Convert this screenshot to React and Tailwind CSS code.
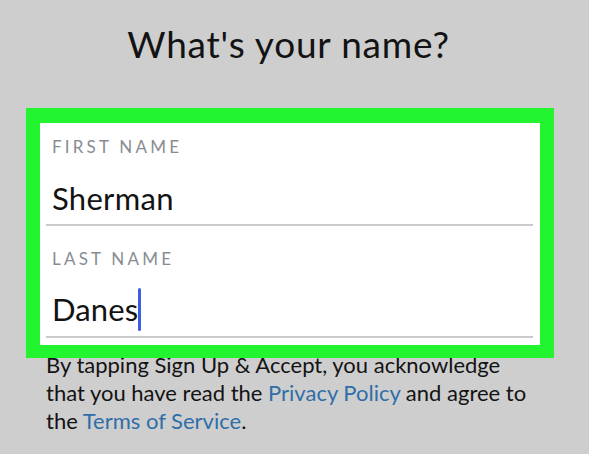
export default function App() {
  return (
    <div className="w-[589px] h-[454px] overflow-hidden bg-[#cecece] text-[#131313]" style={{ fontFamily: "Lato, 'Noto Sans', sans-serif" }}>
      <div className="pt-[22px] pr-[12px] h-[108px] text-center text-[37px] leading-[44px] tracking-[0.8px]">What's your name?</div>
      <div className="ml-[26px] w-[528px] border-[14px] border-t-[15px] border-b-[13px] border-[#22f52f] bg-white relative z-10">
        <div className="h-[103px] px-[6px] flex flex-col">
          <div className="pl-[6px] pt-[13px] text-[17px] leading-[22px] tracking-[3.2px] text-[#878c93]">FIRST NAME</div>
          <div className="pl-[6px] pt-[22px] text-[31px] leading-[36px] tracking-[0.3px]">Sherman</div>
          <div className="mt-auto border-b-2 border-[#cbcbcf] mr-[1px]"></div>
        </div>
        <div className="h-[112px] px-[6px] flex flex-col">
          <div className="pl-[6px] pt-[22px] text-[17px] leading-[22px] tracking-[3.2px] text-[#878c93]">LAST NAME</div>
          <div className="pl-[6px] pt-[21px] text-[31px] leading-[36px] tracking-[0.1px] flex items-center">
            <span>Danes</span>
            <span className="inline-block w-[3px] h-[43px] rounded-full bg-[#3d5ee0] -my-[4px]"></span>
          </div>
          <div className="mt-auto border-b-2 border-[#cbcbcf] mr-[1px]"></div>
        </div>
        <div className="h-[7px]"></div>
      </div>
      <p className="relative z-0 -mt-[7px] px-[46px] text-[22px] leading-[28px]">
        By tapping Sign Up &amp; Accept, you acknowledge
        <br />
        that you have read the{" "}
        <span className="text-[#2f6ea8]">Privacy Policy</span> and agree to
        <br />
        the <span className="text-[#2f6ea8]">Terms of Service</span>.
      </p>
    </div>
  );
}
